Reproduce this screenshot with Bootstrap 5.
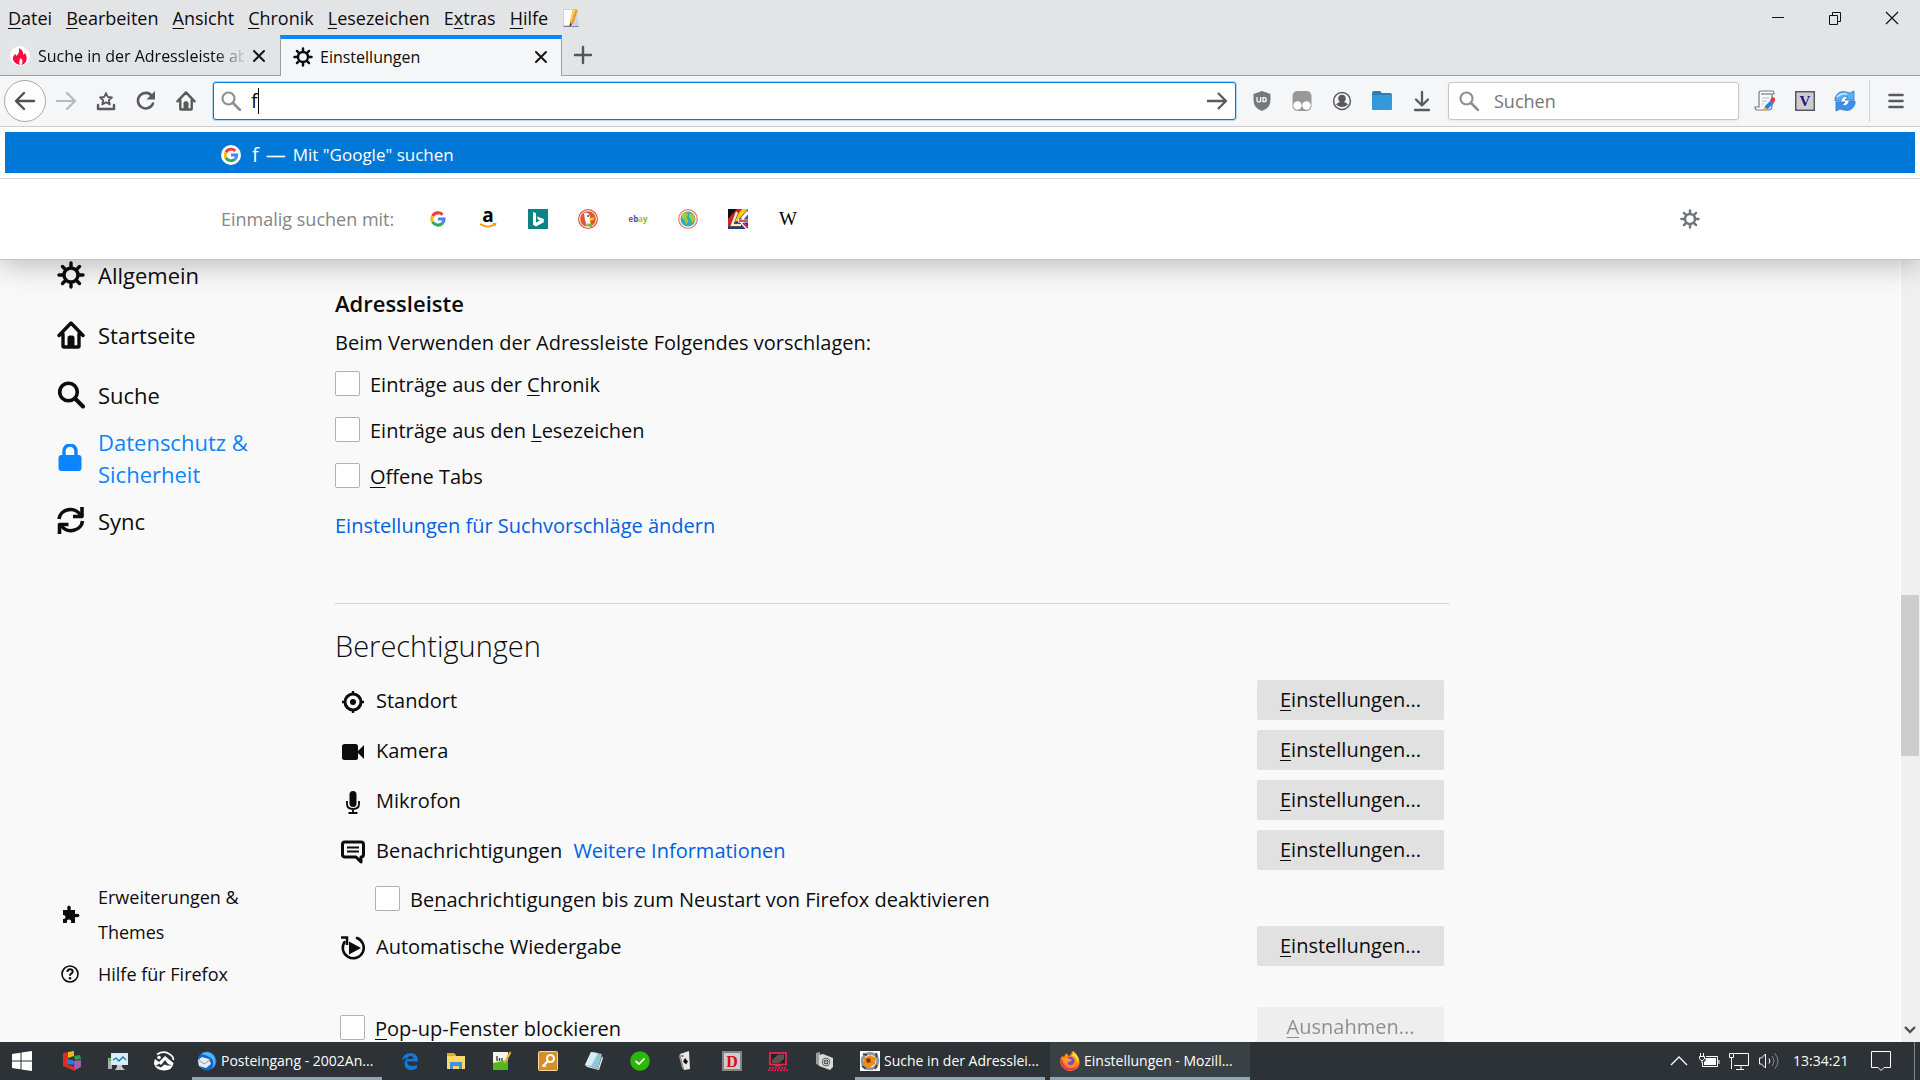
<!DOCTYPE html>
<html lang="de">
<head>
<meta charset="utf-8">
<meta name="viewport" content="width=device-width, initial-scale=1">
<title>Einstellungen</title>
<link href="https://cdn.jsdelivr.net/npm/bootstrap@5.3.0/dist/css/bootstrap.min.css" rel="stylesheet">
<style>
:root{--ink:#0c0c0d;--chrome:#e3e4e6;--bar:#f5f6f7;--line:#9d9ea1;--accent:#0a84ff;--pick:#0078d7;--anchor:#0060df}
body{font-family:"Open Sans","Noto Sans",sans-serif;font-size:20px;line-height:30px;color:var(--ink);background:#f9f9fa;height:100vh;overflow:hidden}
svg{display:block;flex:none;overflow:visible}
u{text-decoration-thickness:1px;text-underline-offset:3px}
button{color:inherit}
.bare{background:none;border:0;padding:0;display:flex;align-items:center;justify-content:center}
.i14{width:14px;height:14px}.i16{width:16px;height:16px}.i18{width:18px;height:18px}.i20{width:20px;height:20px}.i24{width:24px;height:24px}.i28{width:28px;height:28px}

/* window frame */
.titlebar{background:var(--chrome);height:35px;font-size:18px}
.titlebar a{color:var(--ink);text-decoration:none}
.menus{gap:14px;padding-left:8px}
.wincontrols .bare{width:57px;height:35px}
.tabstrip{background:var(--chrome);height:41px;font-size:16px;border-bottom:1px solid var(--line)}
.tabitem{padding:2px 14px 0 10px;gap:8px}
.tabitem.first{width:280px}
.tabitem.current{width:282px;height:41px;background:var(--bar);border:1px solid var(--line);border-top:4px solid var(--accent);border-bottom:0;padding:0 13px 2px 12px;gap:7px}
.fade-end{min-width:0;-webkit-mask-image:linear-gradient(to right,#000 86%,rgba(0,0,0,.2) 98%);mask-image:linear-gradient(to right,#000 86%,rgba(0,0,0,.2) 98%)}
.toolbar-main{background:var(--bar);height:51px;border-bottom:1px solid #ccc;color:#5a5a5c}
.navkeys{padding-left:4px;width:213px}
.navkeys .bare{width:40px;height:42px}
.navkeys .back{width:42px;height:42px;border:1px solid #a9a9aa;border-radius:50%;background:#fdfdfd}
.field{height:38px;background:#fff;border:1px solid #c6c6c8;border-radius:3px;padding:0 8px;box-shadow:0 1px 4px rgba(0,0,0,.06)}
.field input{border:0;outline:0;background:none;min-width:0;flex:1;padding:0;color:var(--ink)}
.field input::placeholder{color:#75757a;opacity:1}
.field.urlfield{border-color:var(--pick);padding-left:7px;box-shadow:0 0 0 1px rgba(0,120,215,.25)}
.urlfield input{font-size:20px;margin-left:10px}
.caret{position:absolute;left:44px;top:5px;width:1px;height:26px;background:#000}
.field.searchfield{width:291px;padding-left:10px}
.searchfield input{font-size:18px;margin-left:15px}
.addons .bare{width:40px;height:38px}
.addons.near{margin:0 6px}
.addons.far{margin-left:6px}
.vr-thin{width:1px;height:42px;background:#d3d4d5}
.mainmenu{padding:0 14px 0 16px}

/* suggestion panel */
.suggest{position:absolute;top:0;left:0;right:0;background:#fff;border-bottom:1px solid #c5c5c5;box-shadow:0 2px 30px rgba(0,0,0,.3);z-index:5}
.hit{margin:5px 5px 5px;height:41px;background:var(--pick);color:#fff;padding:5px 0 0 216px;font-size:17px;gap:7px}
.hit .typed{font-size:20px}
.oneoff{border-top:1px solid #d8d8da;height:81px;padding-left:221px;padding-right:208px;color:#858585;font-size:18px}
.engines{margin-left:19px}
.engines .bare{width:50px;height:40px}

/* preferences */
.cats{width:335px;padding:118px 0 50px 57px;font-size:22px;line-height:32px}
.cats a{color:var(--ink);text-decoration:none;gap:13px;min-height:60px;width:210px}
.cats a.on{color:var(--accent);min-height:66px}
.cats .aux a{font-size:18px;line-height:35px;min-height:35px}
.cats .aux{gap:7px}
.panel{flex:0 1 1114px;padding-top:161px}
.panel a{color:var(--anchor);text-decoration:none}
.panel h2{font-size:22px;font-weight:600;line-height:30px;margin:0 0 10px}
.panel h1{font-size:29px;font-weight:300;line-height:44px;margin:0 0 7px}
.panel hr{margin:62px 0 20px;border-color:#b5b5b8;opacity:.6}
.lead-in{margin-bottom:2px}
.suggest-link{display:inline-block;margin-top:13px}
.tick{display:flex;align-items:center;gap:10px;min-height:46px;margin:0}
.tick span{padding-top:4px}
.tick .form-check-input{width:25px;height:25px;margin:0;border:1px solid #b1b1b3;border-radius:2px;background:#fff;float:none}
.perm{min-height:50px;padding:0 5px;gap:11px}
.perm .name,.perm a{padding-top:2px}
.perm .slot{width:25px;padding-top:4px;display:flex;justify-content:center}
.perm.late{margin-top:25px;padding-top:8px}
.btn.cfg{width:187px;height:40px;padding:0;border:0;border-radius:2px;background:#e1e1e2;font-size:20px;color:var(--ink)}
.btn.cfg:disabled{background:#e1e1e2;opacity:.45}
.track{width:20px;background:#f0f0f0;border-left:1px solid #fff;padding:0 1px 0 0}
.thumb{background:#cdcdcd}

/* taskbar */
.taskbar{height:38px;background:#2d3236;color:#fff;font-size:14px;line-height:38px}
.taskbar .bare{width:46px;height:38px}
.taskbar .startkey{width:49px;padding-right:5px}
.task{width:190px;margin:0 5px;height:38px;border:0;border-bottom:3px solid #93a5b1;background:none;padding:2px 5px 0;gap:4px;color:#fff;line-height:33px}
.task.on{width:200px;margin:0;padding:2px 10px 0;background:#3a4144}
.tray{gap:10px}
.tray .bare{width:20px}
.clock{margin:0 2px 0 4px;width:66px}
.edge-line{width:1px;height:38px;background:#80868a;margin:0 5px 0 23px}
</style>
<script src="https://cdn.jsdelivr.net/npm/bootstrap@5.3.0/dist/js/bootstrap.bundle.min.js"></script>
</head>
<body class="d-flex flex-column">
<svg width="0" height="0" class="position-absolute" aria-hidden="true">
<symbol id="gear" viewBox="0 0 28 28"><g stroke="currentColor" fill="none"><circle cx="14" cy="14" r="7" stroke-width="3.4"/><path stroke-width="3.4" stroke-linecap="round" d="M14 2v4M14 22v4M2 14h4M22 14h4M5.5 5.5l2.7 2.7M19.8 19.8l2.7 2.7M5.5 22.5l2.7-2.7M19.8 8.2l2.7-2.7"/></g></symbol>
<symbol id="home" viewBox="0 0 28 28"><path fill="none" stroke="currentColor" stroke-width="3.4" stroke-linejoin="round" stroke-linecap="round" d="M2 14.500L14 2l12 12.500M6 13v12q0 1 1 1h14q1 0 1-1V13"/><path fill="currentColor" d="M10.500 26v-9q0-2.500 2.500-2.500h2q2.500 0 2.500 2.500v9z"/></symbol>
<symbol id="lens" viewBox="0 0 28 28"><circle cx="11.500" cy="11" r="8.800" fill="none" stroke="currentColor" stroke-width="3.600"/><path d="M18 17.500l8 8" stroke="currentColor" stroke-width="4" stroke-linecap="round"/></symbol>
<symbol id="lensThin" viewBox="0 0 20 20"><circle cx="7.500" cy="7.500" r="6" fill="none" stroke="#8f8f90" stroke-width="2.200"/><path d="M12 12l7 7" stroke="#8f8f90" stroke-width="2.600" stroke-linecap="round"/></symbol>
<symbol id="lock" viewBox="0 0 28 28"><rect x="1.500" y="11" width="23" height="16" rx="3" fill="currentColor"/><path d="M7 13V7a6 6 0 0112 0v6" fill="none" stroke="currentColor" stroke-width="3.400"/></symbol>
<symbol id="sync" viewBox="0 0 28 28"><g fill="none" stroke="currentColor" stroke-width="3.600" stroke-linecap="butt" stroke-linejoin="round"><path d="M2 12A11.500 10.500 0 0123.500 8M25.500 14A11.500 10.500 0 014.500 19"/><path d="M25 0v9.500h-9M2.500 27v-9.500h9"/></g></symbol>
<symbol id="xmark" viewBox="0 0 14 14"><path d="M2 2l10 10M12 2L2 12" stroke="#151516" stroke-width="2" stroke-linecap="round"/></symbol>
<symbol id="googleG" viewBox="0 0 20 20"><g fill="none" stroke-width="3.400"><path stroke="#ea4335" d="M4 6.800A6.800 6.800 0 0115 5.300"/><path stroke="#fbbc05" d="M4 13.200A6.800 6.800 0 014 6.800"/><path stroke="#34a853" d="M14.600 15A6.800 6.800 0 014 13.200"/><path stroke="#4285f4" d="M10 10h6.800A6.800 6.800 0 0114.600 15"/></g></symbol>
<symbol id="fox" viewBox="0 0 20 20"><path fill="#ff8a16" d="M2 5l2 1q1-3 3-4 0 2 2 3 3-2 3-5 5 4 7 8 2 6-2 9.500-6 4.500-12 1Q-1 14 .5 8z"/><path fill="#ffd83d" d="M13 0q0 3-1 5 5 1 5 7 3-3 1-6-1-3-5-6z"/><path fill="#f0355c" d="M.5 9q0 10 9.500 10.500 6 0 9-6-4 4-9 3.500-6-.5-8-9z"/><circle cx="10" cy="10" r="4.300" fill="#7947d8"/><path fill="#ff9c20" d="M4 7q3-1 6 1l2 1q-1 2-4 2-1 2 2 3-5 0-6-4z"/></symbol>
</svg>

<header>
 <nav class="titlebar d-flex align-items-center justify-content-between" aria-label="Menü">
  <div class="menus d-flex align-items-center">
   <a href="#"><u>D</u>atei</a><a href="#"><u>B</u>earbeiten</a><a href="#"><u>A</u>nsicht</a><a href="#"><u>C</u>hronik</a><a href="#"><u>L</u>esezeichen</a><a href="#">E<u>x</u>tras</a><a href="#"><u>H</u>ilfe</a>
   <button class="bare" aria-label="Notiz"><svg class="i20" viewBox="0 0 20 20"><path fill="#c9d3ea" d="M1 1h13l3 17-1 1H1z"/><path fill="#fff" d="M2 2h9v15H2z"/><path d="M1.500 18.500h15" stroke="#7583a8"/><path fill="#f39a1c" d="M11 1l5 1-5 14-3 2V13z"/><path fill="#ffd36a" d="M11.500 1l2 .5-4 12-1.500 0z"/><path fill="#333" d="M8 15l2 1.500L7.500 18.500z"/></svg></button>
  </div>
  <div class="wincontrols d-flex">
   <button class="bare" aria-label="Minimieren"><svg class="i16" viewBox="0 0 16 16"><path d="M2 7.500h12" stroke="#111"/></svg></button>
   <button class="bare" aria-label="Wiederherstellen"><svg class="i16" viewBox="0 0 16 16"><path d="M2.500 5.500h8v9h-8zM5.500 5V2.500h8v9H11" fill="none" stroke="#111"/></svg></button>
   <button class="bare" aria-label="Schließen"><svg class="i16" viewBox="0 0 16 16"><path d="M2 2l12 12M14 2L2 14" stroke="#111" stroke-width="1.200"/></svg></button>
  </div>
 </nav>

 <div class="tabstrip d-flex">
  <div class="tabitem first d-flex align-items-center">
   <svg class="i20" viewBox="0 0 20 20"><circle cx="10" cy="10" r="10" fill="#fff"/><path fill="#ff0b3a" d="M9 2q5 3 4 7l2-2q4 7-1 11l-3 1q3-3 0-7-3 3-1 7Q2 17 3 11l2-3q1 0 1 2 4-3 3-8z"/></svg>
   <span class="fade-end text-nowrap">Suche in der Adressleiste ab</span>
   <button class="bare ms-auto" aria-label="Tab schließen"><svg class="i14"><use href="#xmark"/></svg></button>
  </div>
  <div class="tabitem current d-flex align-items-center">
   <svg class="i20"><use href="#gear"/></svg>
   <span class="flex-grow-1">Einstellungen</span>
   <button class="bare" aria-label="Tab schließen"><svg class="i14"><use href="#xmark"/></svg></button>
  </div>
  <button class="bare px-2 ms-1" aria-label="Neuer Tab"><svg class="i18" viewBox="0 0 18 18"><path d="M9 1v16M1 9h16" stroke="#555659" stroke-width="2.400" stroke-linecap="round"/></svg></button>
 </div>

 <div class="toolbar-main d-flex align-items-center">
  <div class="navkeys d-flex align-items-center">
   <button class="bare back" aria-label="Zurück"><svg class="i20" viewBox="0 0 20 20"><path d="M19 10H2M9 2l-8 8 8 8" fill="none" stroke="#4f5053" stroke-width="2.400" stroke-linecap="round" stroke-linejoin="round"/></svg></button>
   <button class="bare" aria-label="Vor"><svg class="i20" viewBox="0 0 20 20"><path d="M1 10h17M11 2l8 8-8 8" fill="none" stroke="#b7b8ba" stroke-width="2.200" stroke-linecap="round" stroke-linejoin="round"/></svg></button>
   <button class="bare" aria-label="Lesezeichen"><svg class="i20" viewBox="0 0 20 20"><path d="M10 2l1.800 4 4.200.4-3.200 2.800 1 4.200L10 11.200 6.200 13.400l1-4.200L4 6.400 8.200 6z" fill="none" stroke="currentColor" stroke-width="1.800" stroke-linejoin="round"/><path d="M2 14v4h16v-4" fill="none" stroke="currentColor" stroke-width="2.400" stroke-linecap="round" stroke-linejoin="round"/></svg></button>
   <button class="bare" aria-label="Neu laden"><svg class="i20" viewBox="0 0 20 20"><path d="M17 12.500A7.800 7.800 0 1116 5" fill="none" stroke="currentColor" stroke-width="2.600" stroke-linecap="round"/><path d="M19 0v8.500h-8.500z" fill="currentColor"/></svg></button>
   <button class="bare" aria-label="Startseite"><svg class="i20"><use href="#home"/></svg></button>
  </div>
  <div class="field urlfield d-flex align-items-center flex-grow-1 position-relative">
   <svg class="i20"><use href="#lensThin"/></svg>
   <input type="text" value="f" aria-label="Adresse">
   <span class="caret"></span>
   <button class="bare" aria-label="Los"><svg class="i20" viewBox="0 0 20 20"><path d="M0 10h18M11 2l8 8-8 8" fill="none" stroke="#5a5a5c" stroke-width="2.300" stroke-linejoin="round"/></svg></button>
  </div>
  <div class="addons near d-flex">
   <button class="bare" aria-label="uBlock"><svg class="i20" viewBox="0 0 20 20"><path d="M10 0l8.500 3v6q0 8-8.500 11Q1.500 17 1.500 9V3z" fill="#77787a"/><path d="M5 6v3.500q0 1.500 1.800 1.500t1.800-1.500V6M8.600 6v5M11 6.700h1.200q2 0 2 2t-2 2H11z" stroke="#fff" stroke-width="1.300" fill="none"/></svg></button>
   <button class="bare" aria-label="Behälter"><svg class="i20" viewBox="0 0 20 20"><rect x=".5" y="0" width="19" height="20" rx="5" fill="#989898"/><circle cx="5.500" cy="14.500" r="4.200" fill="#fff"/><circle cx="14.500" cy="14.500" r="4.200" fill="#fff"/></svg></button>
   <button class="bare" aria-label="Konto"><svg class="i20" viewBox="0 0 20 20"><circle cx="10" cy="10" r="8.400" fill="none" stroke="currentColor" stroke-width="1.500"/><circle cx="10" cy="7.500" r="3.800" fill="currentColor"/><path d="M4 13.500q2-2.500 4-2.500h4q2 0 4 2.500-6 5-12 0z" fill="currentColor"/></svg></button>
   <button class="bare" aria-label="Ordner"><svg class="i20" viewBox="0 0 20 20"><path d="M0 2q0-2 2-2h6l2 2h8q2 0 2 2v3H0z" fill="#2980b9"/><rect y="4" width="20" height="15" rx="1" fill="#3498db"/></svg></button>
   <button class="bare" aria-label="Downloads"><svg class="i20" viewBox="0 0 20 20"><path d="M10 1v13M4 8.500l6 6 6-6M3 19h14" fill="none" stroke="currentColor" stroke-width="2.300" stroke-linecap="round" stroke-linejoin="round"/></svg></button>
  </div>
  <div class="field searchfield d-flex align-items-center">
   <svg class="i20"><use href="#lensThin"/></svg>
   <input type="search" placeholder="Suchen" aria-label="Suchen">
  </div>
  <div class="addons far d-flex align-items-center">
   <button class="bare" aria-label="Skript"><svg class="i20" viewBox="0 0 20 20"><path d="M4 2q0-2 2-2h12q1 0 1 3h-2v12q0 4-4 4H2q-2 0-2-3h4z" fill="#f8fafc" stroke="#707c8c" stroke-width="1.200"/><path d="M6 3h11" stroke="#8b95a2" stroke-width="1.500"/><path d="M7 7h7M7 10h5M7 13h2" stroke="#abc"/><path d="M16 9l3 3-6 6-4 1 1-4z" fill="#2a84e8"/><path d="M17 6l3 1v3l-2 2-3-3z" fill="#e4402c"/><path d="M8 20l1.500-4.500 3 3z" fill="#f4ad45"/></svg></button>
   <button class="bare" aria-label="V"><svg class="i20" viewBox="0 0 20 20"><rect x=".75" y=".75" width="18.500" height="18.500" fill="#cdcbd0" stroke="#45454c" stroke-width="1.300"/><text x="10" y="15" font-family="Liberation Serif,serif" font-weight="700" font-size="15" text-anchor="middle" fill="#15157a">V</text></svg></button>
   <button class="bare" aria-label="Aktualisieren"><svg class="i20" viewBox="0 0 20 20"><path d="M0 10V7Q3-1 11 1l4 1 4-2v9h-9l3-3q-4-2-6 1-1 1-1 3z" fill="#58b2f6" stroke="#2a76cf" stroke-width=".8"/><path d="M20 10v3q-3 8-11 6l-4-1-4 2v-9h9l-3 3q4 2 6-1 1-1 1-3z" fill="#3c92ea" stroke="#2a76cf" stroke-width=".8"/><path d="M2 6q4-4 10-3" stroke="#c9eaff" fill="none" stroke-width="1.500"/></svg></button>
  </div>
  <span class="vr-thin ms-1"></span>
  <button class="bare mainmenu" aria-label="Menü öffnen"><svg class="i20" viewBox="0 0 20 20"><path d="M3.500 4h13M3.500 10h13M3.500 16h13" stroke="currentColor" stroke-width="2.600" stroke-linecap="round"/></svg></button>
 </div>
</header>

<div class="position-relative flex-grow-1 d-flex overflow-hidden">
 <div class="suggest">
  <div class="hit d-flex align-items-center">
   <svg class="i20" viewBox="0 0 20 20"><circle cx="10" cy="10" r="10" fill="#fff"/><svg x="1.500" y="1.500" width="17" height="17"><use href="#googleG"/></svg></svg>
   <span class="typed ms-1">f</span><span class="typed">—</span><span>Mit "Google" suchen</span>
  </div>
  <div class="oneoff d-flex align-items-center">
   <span>Einmalig suchen mit:</span>
   <div class="engines d-flex flex-grow-1">
    <button class="bare" aria-label="Google"><svg class="i18"><use href="#googleG"/></svg></button>
    <button class="bare" aria-label="Amazon"><svg class="i20" viewBox="0 0 20 20"><text x="10" y="13" font-size="19" font-weight="700" text-anchor="middle" fill="#000">a</text><path d="M2 15q8 5 14 .5" fill="none" stroke="#f90" stroke-width="1.700"/><path d="M14.500 14h4l-1.500 4z" fill="#f90"/></svg></button>
    <button class="bare" aria-label="Bing"><svg class="i20" viewBox="0 0 20 20"><path fill="#0c8484" d="M0 0h20v20H0z"/><path fill="#fff" d="M5 3l3 1v9.500l4-2-2-1-1.200-3 7 2.500v3.200L8 17.500 5 15.800z"/></svg></button>
    <button class="bare" aria-label="DuckDuckGo"><svg class="i20" viewBox="0 0 20 20"><circle cx="10" cy="10" r="10" fill="#de5833"/><circle cx="10" cy="10" r="8.300" fill="none" stroke="#fff" stroke-width="1"/><path fill="#fff" d="M6 4q5-1 6 4v4l1 5q-3 2-4 1L7 11z"/><path fill="#fdd209" d="M11 9l5-.5v2l-4 1.500z"/><path fill="#65bc46" d="M9 14.500l5 .5v3l-5-1z"/><circle cx="10" cy="7" r="1" fill="#2d4f8d"/></svg></button>
    <button class="bare" aria-label="eBay"><svg class="i20" viewBox="0 0 20 20"><text x="10" y="13" font-size="8" font-weight="700" text-anchor="middle"><tspan fill="#e53238">e</tspan><tspan fill="#0064d2">b</tspan><tspan fill="#f5af02">a</tspan><tspan fill="#86b817">y</tspan></text></svg></button>
    <button class="bare" aria-label="Ecosia"><svg class="i20" viewBox="0 0 20 20"><circle cx="10" cy="10" r="9.300" fill="#fff" stroke="#f08060" stroke-width="1.300"/><circle cx="10" cy="10" r="7.500" fill="#36acb8"/><path fill="#b8c92c" d="M4 6q2-3 5-2l1 2-2 2 2 3-1 4q-2-1-2-4L4 9zM12 4l4 2 1 5-3 3-1-4-2-2z"/></svg></button>
    <button class="bare" aria-label="LEO"><svg class="i20" viewBox="0 0 20 20"><path fill="#24388c" d="M0 0h20v20H0z"/><path d="M0 0h9L0 10z" fill="#111"/><path d="M0 10L9 0h5L0 18z" fill="#e01b22"/><path d="M3 14L14 0h6L10 12z" fill="#ffce00"/><path d="M10 11l9-10h1v9H11z" fill="#4a4fa0"/><path d="M10 12h10M13 13l7 7M14 10l6-7" stroke="#fff" stroke-width="3"/><path d="M11 12h9M15 14l5 5" stroke="#d9141e" stroke-width="1.600"/><path d="M9 3L4 16h9" fill="none" stroke="#6b5a3c" stroke-width="3.600"/><path d="M9 3L4 16h9" fill="none" stroke="#f7eccb" stroke-width="2.200"/></svg></button>
    <button class="bare" aria-label="Wikipedia"><svg class="i20" viewBox="0 0 20 20"><text x="10" y="16" font-family="Liberation Serif,serif" font-size="19" text-anchor="middle" fill="#000">W</text></svg></button>
   </div>
   <button class="bare me-2 pe-1" aria-label="Sucheinstellungen"><svg class="i20 text-secondary"><use href="#gear"/></svg></button>
  </div>
 </div>

 <nav class="cats d-flex flex-column" aria-label="Kategorien">
  <a href="#" class="d-flex align-items-center"><svg class="i28"><use href="#gear"/></svg>Allgemein</a>
  <a href="#" class="d-flex align-items-center"><svg class="i28"><use href="#home"/></svg>Startseite</a>
  <a href="#" class="d-flex align-items-center"><svg class="i28"><use href="#lens"/></svg>Suche</a>
  <a href="#" class="on d-flex align-items-center"><svg class="i28"><use href="#lock"/></svg>Datenschutz &amp; Sicherheit</a>
  <a href="#" class="d-flex align-items-center"><svg class="i28"><use href="#sync"/></svg>Sync</a>
  <div class="aux mt-auto d-flex flex-column">
   <a href="#" class="d-flex align-items-center"><svg class="i28" viewBox="-5 -4 28 28"><path fill="currentColor" d="M1 5h4.500Q4.500 1 7 .500 9.500 1 8.500 5H13v4q4.500-1 4.500 1.500T13 12v6H9q.8-3.500-2-3.500T5 18H1v-4q2.500.5 2.500-1.700T1 10z"/></svg>Erweiterungen &amp; Themes</a>
   <a href="#" class="d-flex align-items-center"><svg class="i28" viewBox="-4 -4 28 28"><circle cx="9" cy="9" r="8" fill="none" stroke="currentColor" stroke-width="1.600"/><path d="M6.300 6.800q.2-2.600 2.700-2.600t2.700 2.300q0 1.500-1.500 2.200-1.200.6-1.200 2" fill="none" stroke="currentColor" stroke-width="2"/><circle cx="9" cy="13.300" r="1.300" fill="currentColor"/></svg>Hilfe für Firefox</a>
  </div>
 </nav>

 <main class="panel">
  <h2>Adressleiste</h2>
  <div class="lead-in">Beim Verwenden der Adressleiste Folgendes vorschlagen:</div>
  <label class="tick"><input class="form-check-input" type="checkbox"><span>Einträge aus der <u>C</u>hronik</span></label>
  <label class="tick"><input class="form-check-input" type="checkbox"><span>Einträge aus den <u>L</u>esezeichen</span></label>
  <label class="tick"><input class="form-check-input" type="checkbox"><span><u>O</u>ffene Tabs</span></label>
  <a href="#" class="suggest-link">Einstellungen für Suchvorschläge ändern</a>
  <hr>
  <h1>Berechtigungen</h1>
  <div class="perm d-flex align-items-center"><span class="slot"><svg class="i24" viewBox="0 0 24 24"><circle cx="12" cy="12" r="8" fill="none" stroke="currentColor" stroke-width="3"/><circle cx="12" cy="12" r="3" fill="currentColor"/><path d="M12 1v4M12 19v4M1 12h4M19 12h4" stroke="currentColor" stroke-width="2.400"/></svg></span><span class="name me-auto">Standort</span><button class="btn cfg"><u>E</u>instellungen...</button></div>
  <div class="perm d-flex align-items-center"><span class="slot"><svg class="i24" viewBox="0 0 24 24"><rect x="1" y="4" width="16" height="16" rx="2.500" fill="currentColor"/><path d="M16 12l7-7v14z" fill="currentColor"/></svg></span><span class="name me-auto">Kamera</span><button class="btn cfg"><u>E</u>instellungen...</button></div>
  <div class="perm d-flex align-items-center"><span class="slot"><svg class="i24" viewBox="0 0 24 24"><rect x="8.500" y="1" width="7" height="16" rx="3.500" fill="currentColor"/><path d="M6 11v3q0 5 6 5t6-5v-3M12 19v4M7.500 23h9" fill="none" stroke="currentColor" stroke-width="1.800"/></svg></span><span class="name me-auto">Mikrofon</span><button class="btn cfg"><u>E</u>instellungen...</button></div>
  <div class="perm d-flex align-items-center"><span class="slot"><svg class="i24" viewBox="0 0 24 24"><path d="M4 2h16q2.500 0 2.500 2.500v10Q22.500 17 20 17v5l-5-5H4q-2.500 0-2.500-2.500v-10Q1.500 2 4 2z" fill="none" stroke="currentColor" stroke-width="3" stroke-linejoin="round"/><path d="M6 7.500h12M6 11.500h12" stroke="currentColor" stroke-width="1.800"/></svg></span><span class="name">Benachrichtigungen</span><a href="#" class="me-auto">Weitere Informationen</a><button class="btn cfg"><u>E</u>instellungen...</button></div>
  <label class="tick ms-4 ps-3"><input class="form-check-input" type="checkbox"><span>Be<u>n</u>achrichtigungen bis zum Neustart von Firefox deaktivieren</span></label>
  <div class="perm d-flex align-items-center"><span class="slot"><svg class="i24" viewBox="0 0 24 24"><path d="M16 2A10.500 10.500 0 11 3.500 6" fill="none" stroke="currentColor" stroke-width="2.500" stroke-linecap="round"/><path d="M0 1.500h6V9" fill="none" stroke="currentColor" stroke-width="2.500"/><path d="M8 5.500v13L20 12z" fill="currentColor"/></svg></span><span class="name me-auto">Automatische Wiedergabe</span><button class="btn cfg"><u>E</u>instellungen...</button></div>
  <div class="perm late d-flex align-items-center"><label class="tick me-auto"><input class="form-check-input" type="checkbox"><span><u>P</u>op-up-Fenster blockieren</span></label><button class="btn cfg" disabled><u>A</u>usnahmen...</button></div>
 </main>

 <div class="track ms-auto d-flex flex-column" aria-hidden="true">
  <div style="flex:468"></div><div class="thumb" style="flex:161"></div><div style="flex:286" class="d-flex align-items-end justify-content-center"><svg class="i16" viewBox="0 0 16 16"><path d="M3 1l5 5 5-5" fill="none" stroke="#505050" stroke-width="2.400"/></svg></div>
 </div>
</div>

<footer class="taskbar d-flex align-items-center">
 <button class="bare startkey" aria-label="Start"><svg class="i20" viewBox="0 0 20 20"><path fill="#fff" d="M0 3l8.500-1.300v7.800H0zM9.500 1.500L20 0v9.500H9.500zM0 10.500h8.500v7.800L0 17zM9.500 10.500H20V20L9.500 18.500z"/></svg></button>
 <button class="bare" aria-label="Bausteine"><svg class="i20" viewBox="0 0 20 20"><path fill="#e02b20" d="M1 2l5-1v13l8 2-1 4-12-5z"/><path fill="#f3b51b" d="M6 1l6-1v5L6 7z"/><path fill="#2b7ce0" d="M5 8l6 1v5l-6-1z"/><path fill="#23a34a" d="M12 5l6-1 1 4-6 1z"/><path fill="#9a60b8" d="M11 10l8-1v7l-6 3z"/></svg></button>
 <button class="bare" aria-label="Monitor"><svg class="i20" viewBox="0 0 20 20"><path fill="#aab0b4" d="M0 7h4v11H0z"/><path fill="#dfe6ea" d="M3 2h17v12H3z"/><path fill="#d5f0ff" d="M4.500 3.500h14v9h-14z"/><path d="M5 9l3-2 3 3 4-4 3 3" fill="none" stroke="#1673b8" stroke-width="1.300"/><path fill="#c4c8cb" d="M9 14h5v2l3 3H7l2-3z"/><circle cx="2" cy="9" r="1.200" fill="#2c2"/></svg></button>
 <button class="bare" aria-label="Bilder"><svg class="i20" viewBox="0 0 20 20"><path d="M3 3.500Q9-.5 14.500 2.500T19.300 9" stroke="#fff" stroke-width="1.800" fill="none"/><path fill="#fff" d="M0 13q0-3 1-5l4 3 6-6 8.500 7q-1 7.500-9.500 7.500-7.500 0-10-6.500z"/><circle cx="5" cy="6.500" r="1.800" fill="#fff"/><path d="M1.500 15l4-2.500 1.500 1.500 4-5 3 4 4 1.500-4.500 0-3-1-3.500 3-2-1z" fill="#2d3236"/></svg></button>
 <button class="task d-flex align-items-center text-nowrap"><svg class="i20" viewBox="0 0 20 20"><circle cx="10" cy="10" r="9.500" fill="#1464c4"/><path d="M4 3q7-5 13 2 4 7-2 13 3-8-1-11-4-3-10-4z" fill="#54b5f5"/><path fill="#e9edf2" d="M1 9l4-3 7 2 2 5-5 4-7-2z"/><path d="M2 9l5 4 6-4" fill="none" stroke="#8a97a8"/></svg><span>Posteingang - 2002An...</span></button>
 <button class="bare" aria-label="Edge"><svg class="i18" viewBox="0 0 18 18"><path d="M1 8.500Q2 1 9.500 1T17 9.500H6q.5 4.500 5 4.500 3 0 5-1.300v3.500Q14 18 10 18q-6.500 0-6.500-6.500Q3.500 8 7 6 3 6 1 8.500zM6.300 7h6Q12 4 9.500 4T6.300 7z" fill="#0c7ade"/></svg></button>
 <button class="bare" aria-label="Explorer"><svg class="i20" viewBox="0 0 20 20"><path fill="#e8a90c" d="M1 2h7l2 2v4H1z"/><path fill="#ffd768" d="M1 5h18v13H1z"/><path fill="#3c93d9" d="M4 18v-7h12v7h-3v-3H7v3z"/></svg></button>
 <button class="bare" aria-label="Editor"><svg class="i20" viewBox="0 0 20 20"><path fill="#f3f4ee" d="M1 1h15v18H1z"/><path fill="#4fb81e" d="M1 12l15-3v10H1z"/><path d="M5 5v5M7.500 7v3M10 7v3" stroke="#333" stroke-width="1.300"/><path d="M18.500 1l-6 11" stroke="#e0b12e" stroke-width="2.200"/></svg></button>
 <button class="bare" aria-label="Schlüssel"><svg class="i20" viewBox="0 0 20 20"><rect x=".5" y=".5" width="19" height="19" rx="1" fill="#d68f27" stroke="#f4d9a6"/><circle cx="12.500" cy="7.500" r="3.500" fill="none" stroke="#fff" stroke-width="2"/><path d="M10 10l-5.500 5.500M5.500 13.500l2 2" stroke="#fff" stroke-width="2.200"/></svg></button>
 <button class="bare" aria-label="Notizblock"><svg class="i20" viewBox="0 0 20 20"><path fill="#8fc7d6" d="M7 1l11 2-4 15-13-4z"/><path fill="#d5eef4" d="M7 1l7 1-7 13-6-1z"/><path fill="#e7eaec" d="M1 14l13 4 4-13 1 2-4 12-12-3z"/></svg></button>
 <button class="bare" aria-label="Geprüft"><svg class="i20" viewBox="0 0 20 20"><circle cx="10" cy="10" r="9.800" fill="#2cb70a"/><path d="M5.500 10l3.500 3 5.500-5.500" fill="none" stroke="#fff" stroke-width="1.700"/></svg></button>
 <button class="bare" aria-label="Karten"><svg class="i20" viewBox="0 0 20 20"><path fill="#e9e9e9" d="M4 3l9-3 1 18-6 1z"/><path fill="#999" d="M4 3l4 16-2-2L3 5z"/><path fill="#111" d="M9 7l3 3.500-2 3-3-3z"/><circle cx="6.500" cy="5" r="1" fill="#d22"/></svg></button>
 <button class="bare" aria-label="D"><svg class="i20" viewBox="0 0 20 20"><rect x="1" y="1" width="18" height="18" fill="#c9cbcc" stroke="#808486" stroke-width="2"/><text x="10" y="15.500" font-family="Liberation Serif,serif" font-weight="700" font-size="16" text-anchor="middle" fill="#e30613">D</text></svg></button>
 <button class="bare" aria-label="PC"><svg class="i20" viewBox="0 0 20 20"><rect x="2" y="2" width="16" height="11.500" fill="#222" stroke="#ee2150" stroke-width="1.800"/><path d="M4 12V9l6-5.500h6V8l-5 4z" fill="#555"/><path d="M7 14h6v1.500H7z" fill="#ee2150"/><path d="M1 17h18M0 19.200h20" stroke="#ee2150" stroke-width="1.500" stroke-dasharray="2 1"/></svg></button>
 <button class="bare" aria-label="Kamera"><svg class="i20" viewBox="0 0 20 20"><path fill="#9b9d9e" d="M2 2l4-1v14l-4-2z"/><path fill="#d9d9d5" d="M5 4l4-1 10 4v9l-3 3-11-4z"/><circle cx="12" cy="11" r="4.200" fill="#555"/><circle cx="12" cy="11" r="3" fill="none" stroke="#ddd"/><circle cx="12" cy="11" r="1.200" fill="#bbb"/></svg></button>
 <button class="task d-flex align-items-center text-nowrap ms-2"><svg class="i20" viewBox="0 0 20 20"><path fill="#fff" d="M0 0h20v20H0z"/><circle cx="10" cy="10" r="7.800" fill="none" stroke="#8e98a3" stroke-width="3"/><path d="M3 3l4 1M16 2l1 4M2 15l4 3M17 14l-2 4" stroke="#444" stroke-width="2"/><path fill="#ef8b17" d="M4 7l6-3 6 3-1 6-6 4-5-3z"/><path d="M6 8l4-1 1 4-4 1z" fill="#713a00"/></svg><span>Suche in der Adresslei...</span></button>
 <button class="task on d-flex align-items-center text-nowrap"><svg class="i20"><use href="#fox"/></svg><span>Einstellungen - Mozill...</span></button>
 <div class="tray d-flex align-items-center ms-auto">
  <button class="bare" aria-label="Mehr"><svg class="i20" viewBox="0 0 20 20"><path d="M2 14l8-8 8 8" fill="none" stroke="#fff" stroke-width="1.300"/></svg></button>
  <button class="bare" aria-label="Akku"><svg class="i20" viewBox="0 0 20 20"><path d="M7 5.500h11.500v10h-15v-4M20 9v4" fill="none" stroke="#fff"/><path d="M6 7h11v7H5v-3l2-2z" fill="#fff"/><path d="M1.500 2v3M4.500 2v3M.5 5.500h5v2l-1.500 2h-2L.500 7.500zM3 9v3" fill="none" stroke="#fff"/></svg></button>
  <button class="bare" aria-label="Netzwerk"><svg class="i20" viewBox="0 0 20 20"><path d="M5 2.500h14.500v12H5M12 15v3M7 18.500h8M.5 2.500h4v4h-4zM2.500 7v11" fill="none" stroke="#fff"/></svg></button>
  <button class="bare" aria-label="Lautstärke"><svg class="i20" viewBox="0 0 20 20"><path d="M.5 7h2l4-4v14l-4-4h-2z" fill="none" stroke="#fff"/><path d="M10 7.500q2 2.500 0 5" fill="none" stroke="#fff"/><path d="M13 5q4 5 0 10M16 2.500q6 7.500 0 15" fill="none" stroke="#8a8f92"/></svg></button>
  <span class="clock">13:34:21</span>
  <button class="bare" aria-label="Mitteilungen"><svg class="i20" viewBox="0 0 20 20"><path d="M.5.500h19v16H13l-3 3-3-3H.5z" fill="none" stroke="#fff"/></svg></button>
 </div>
 <span class="edge-line"></span>
</footer>
</body>
</html>
